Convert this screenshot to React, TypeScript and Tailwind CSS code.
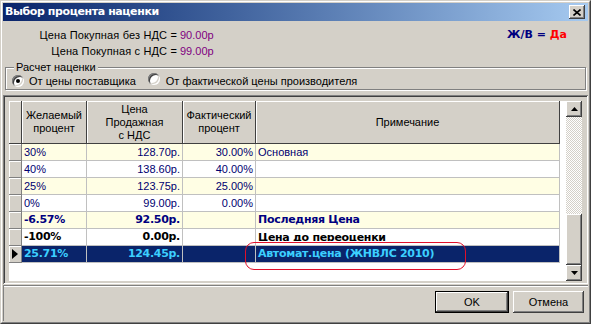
import React from 'react';

const SANS = "font-['Liberation_Sans',Arial,sans-serif]";
const BOLD = "font-['DejaVu_Sans',Verdana,sans-serif] font-bold";

const RAISED =
  'shadow-[inset_-1px_-1px_0_#404040,inset_1px_1px_0_#ffffff,inset_-2px_-2px_0_#808080,inset_2px_2px_0_#d4d0c8]';
const SUNKEN =
  'shadow-[inset_1px_1px_0_#808080,inset_-1px_-1px_0_#ffffff,inset_2px_2px_0_#404040,inset_-2px_-2px_0_#d4d0c8]';

type Row = {
  p: string;
  price: string;
  fact: string;
  note: string;
  kind: 'plain' | 'navy' | 'black' | 'sel';
  yellow?: boolean;
  clip?: boolean;
};

const ROWS: Row[] = [
  { p: '30%', price: '128.70р.', fact: '30.00%', note: 'Основная', kind: 'plain', yellow: true },
  { p: '40%', price: '138.60р.', fact: '40.00%', note: '', kind: 'plain' },
  { p: '25%', price: '123.75р.', fact: '25.00%', note: '', kind: 'plain', yellow: true },
  { p: '0%', price: '99.00р.', fact: '0.00%', note: '', kind: 'plain' },
  { p: '-6.57%', price: '92.50р.', fact: '', note: 'Последняя Цена', kind: 'navy', yellow: true },
  { p: '-100%', price: '0.00р.', fact: '', note: 'Цена до переоценки', kind: 'black', clip: true },
  { p: '25.71%', price: '124.45р.', fact: '', note: 'Автомат.цена (ЖНВЛС 2010)', kind: 'sel' },
];

const COLS = ['w-[65px]', 'w-[96px]', 'w-[73px]', 'w-[304px]'];

function Radio({ checked }: { checked?: boolean }) {
  return (
    <span className={`relative inline-flex w-[12px] h-[12px] rounded-full bg-white items-center justify-center ${SUNKEN}`}>
      {checked && <span className="w-[4px] h-[4px] rounded-full bg-black" />}
    </span>
  );
}

function Arrow({ up }: { up?: boolean }) {
  return (
    <svg width="7" height="4" viewBox="0 0 7 4">
      <polygon points={up ? '3.5,0 7,4 0,4' : '0,0 7,0 3.5,4'} fill="#000" />
    </svg>
  );
}

function GridRow({ r }: { r: Row }) {
  const sel = r.kind === 'sel';
  const bg = sel ? 'bg-[#0a246a]' : r.yellow ? 'bg-[#fffee4]' : 'bg-white';
  const text =
    r.kind === 'plain'
      ? `${SANS} text-[11px] text-[#000070]`
      : r.kind === 'navy'
        ? `${BOLD} text-[11px] tracking-[-0.3px] text-[#000080]`
        : r.kind === 'black'
          ? `${BOLD} text-[11px] tracking-[-0.3px] text-black`
          : `${BOLD} text-[11px] tracking-[-0.3px] text-[#3ccfff]`;
  const cell = `h-[17px] border-r border-b border-[#c0c0c0] leading-[16px] whitespace-nowrap overflow-hidden ${bg} ${text}`;
  return (
    <div className="flex">
      <div className="w-[13px] h-[17px] bg-[#d4d0c8] border-r border-b border-[#808080] shadow-[inset_1px_1px_0_#ffffff] flex items-center justify-center">
        {sel && (
          <svg width="6" height="10" viewBox="0 0 6 10">
            <polygon points="0,0 6,5 0,10" fill="#000" />
          </svg>
        )}
      </div>
      <div className={`${COLS[0]} ${cell} pl-[2px]`}>{r.p}</div>
      <div className={`${COLS[1]} ${cell} pr-[2px] text-right`}>{r.price}</div>
      <div className={`${COLS[2]} ${cell} pr-[2px] text-right`}>{r.fact}</div>
      <div className={`${COLS[3]} ${cell} pl-[2px]`}>
        {r.clip ? <span className="block h-[12px] overflow-hidden pt-[2px] leading-[13px]">{r.note}</span> : r.note}
      </div>
    </div>
  );
}

export default function App() {
  return (
    <div className={`w-[591px] h-[324px] border border-t-[#d4d0c8] border-l-[#d4d0c8] border-b-[#404040] border-r-[#404040] ${SANS}`}>
      <div className="h-full border border-t-white border-l-white border-b-[#808080] border-r-[#808080] bg-[#d4d0c8] p-[1px] flex flex-col">
        {/* Title bar */}
        <div className="h-[18px] flex items-center justify-between bg-gradient-to-r from-[#0a246a] to-[#a6caf0]">
          <span className={`${BOLD} text-[11px] tracking-[-0.4px] text-white pl-[2px] leading-[18px]`}>Выбор процента наценки</span>
          <button className={`w-[16px] h-[14px] mr-[3px] bg-[#d4d0c8] flex items-center justify-center ${RAISED}`}>
            <svg width="8" height="7" viewBox="0 0 8 7">
              <path d="M0.5 0.5 L7.5 6.5 M7.5 0.5 L0.5 6.5" stroke="#000" strokeWidth="1.6" />
            </svg>
          </button>
        </div>

        {/* Purchase prices */}
        <div className="mt-[6px] text-[11px] text-black">
          <div className="h-[16px] flex items-center">
            <span className="w-[174px] text-right tracking-[0.15px]">Цена Покупная без НДС =</span>
            <span className="pl-[3px] text-[#800080]">90.00р</span>
            <span className={`ml-auto mr-[21px] ${BOLD} text-[11px] text-[#000080]`}>
              Ж/В = <span className="text-[#ff0000]">Да</span>
            </span>
          </div>
          <div className="h-[16px] flex items-center">
            <span className="w-[174px] text-right tracking-[0.15px]">Цена Покупная с НДС =</span>
            <span className="pl-[3px] text-[#800080]">99.00р</span>
          </div>
        </div>

        {/* Group box */}
        <fieldset className="mt-[2px] mx-[2px] h-[29px] border border-[#808080] shadow-[inset_1px_1px_0_#ffffff,1px_1px_0_#ffffff] p-0 min-w-0">
          <legend className="ml-[8px] px-[2px] text-[11px] leading-[13px] h-[13px] bg-[#d4d0c8]">Расчет наценки</legend>
          <div className="h-[14px] flex items-center text-[11px] pl-[6px]">
            <Radio checked />
            <span className="ml-[5px]">От цены поставщика</span>
            <span className="ml-[12px]">
              <Radio />
            </span>
            <span className="ml-[6px]">От фактической цены производителя</span>
          </div>
        </fieldset>

        {/* Grid */}
        <div className={`mt-[5px] h-[189px] pt-[6px] px-[6px] pb-[3px] ${SUNKEN}`}>
          <div className="h-full flex">
            <div className="relative flex-1 bg-white overflow-hidden">
              {/* header */}
              <div className="flex h-[43px] text-[11px] text-black leading-[13px]">
                <div className="w-[13px] bg-[#d4d0c8] border-r border-b border-[#404040] shadow-[inset_1px_1px_0_#ffffff]" />
                {[
                  ['Желаемый', 'процент'],
                  ['Цена', 'Продажная', 'с НДС'],
                  ['Фактический', 'процент'],
                  ['Примечание'],
                ].map((lines, i) => (
                  <div
                    key={i}
                    className={`${COLS[i]} bg-[#d4d0c8] border-r border-b border-[#404040] shadow-[inset_1px_1px_0_#ffffff] flex flex-col items-center justify-center text-center`}
                  >
                    {lines.map((l) => (
                      <span key={l}>{l}</span>
                    ))}
                  </div>
                ))}
              </div>
              {ROWS.map((r) => (
                <GridRow key={r.p + r.price} r={r} />
              ))}
              {/* annotation */}
              <div className="absolute left-[236px] top-[141px] w-[221px] h-[28px] border border-[#e0102a] rounded-[9px]" />
            </div>

            {/* Scrollbar */}
            <div className="w-[16px] flex flex-col">
              <div className={`h-[16px] bg-[#d4d0c8] flex items-center justify-center ${RAISED}`}>
                <Arrow up />
              </div>
              <div className="flex-1 bg-[image:repeating-conic-gradient(#d4d0c8_0%_25%,#ffffff_0%_50%)] bg-[length:2px_2px]" />
              <div className={`h-[51px] bg-[#d4d0c8] ${RAISED}`} />
              <div className={`h-[16px] bg-[#d4d0c8] flex items-center justify-center ${RAISED}`}>
                <Arrow />
              </div>
            </div>
          </div>
        </div>

        {/* Buttons */}
        <div className="mt-[1px] flex-1 border-t border-l border-[#808080] shadow-[inset_0_1px_0_#ffffff] flex justify-end items-start pt-[5px] pr-[4px] gap-[4px]">
          <button className="w-[74px] h-[22px] border border-black text-[11px] text-black">
            <span className={`flex items-center justify-center w-full h-full bg-[#d4d0c8] ${RAISED}`}>OK</span>
          </button>
          <button className={`w-[71px] h-[22px] bg-[#d4d0c8] text-[11px] text-black ${RAISED}`}>Отмена</button>
        </div>
      </div>
    </div>
  );
}
